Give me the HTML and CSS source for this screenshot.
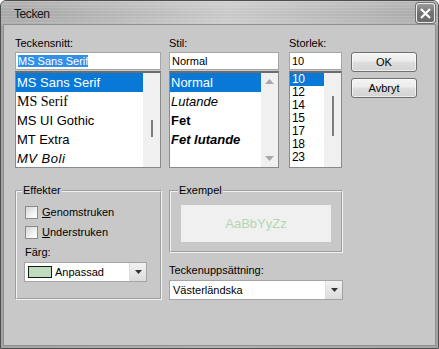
FILE: index.html
```html
<!DOCTYPE html>
<html>
<head>
<meta charset="utf-8">
<link rel="stylesheet" href="styles.css">
</head>
<body>
<div class="window">
  <div class="titlebar">
    <span class="title">Tecken</span>
    <div class="close">
      <svg width="11" height="11" viewBox="0 0 11 11"><path d="M1 1L10 10M10 1L1 10" stroke="#fff" stroke-width="2.2" fill="none"/></svg>
    </div>
  </div>
  <div class="client">
    <div class="top">
      <div class="col col-font">
        <div class="lbl">Teckensnitt:</div>
        <div class="input"><span class="hl">MS Sans Serif</span></div>
        <div class="list">
          <div class="items">
            <div class="item sel">MS Sans Serif</div>
            <div class="item f-serif">MS Serif</div>
            <div class="item">MS UI Gothic</div>
            <div class="item">MT Extra</div>
            <div class="item f-boli">MV Boli</div>
          </div>
          <div class="sb"><div class="thumb thumb-font"></div></div>
        </div>
      </div>
      <div class="col col-style">
        <div class="lbl">Stil:</div>
        <div class="input">Normal</div>
        <div class="list">
          <div class="items">
            <div class="item sel">Normal</div>
            <div class="item it">Lutande</div>
            <div class="item bd">Fet</div>
            <div class="item bd it">Fet lutande</div>
          </div>
          <div class="sb sb-arrows">
            <svg width="9" height="5" viewBox="0 0 9 5"><path d="M0 5L4.5 0L9 5Z" fill="#a8a8a8"/></svg>
            <svg width="9" height="5" viewBox="0 0 9 5"><path d="M0 0L4.5 5L9 0Z" fill="#a8a8a8"/></svg>
          </div>
        </div>
      </div>
      <div class="col col-size">
        <div class="lbl">Storlek:</div>
        <div class="input">10</div>
        <div class="list">
          <div class="items">
            <div class="item sz sel">10</div>
            <div class="item sz">12</div>
            <div class="item sz">14</div>
            <div class="item sz">15</div>
            <div class="item sz">17</div>
            <div class="item sz">18</div>
            <div class="item sz">23</div>
          </div>
          <div class="sb"><div class="thumb thumb-size"></div></div>
        </div>
      </div>
      <div class="buttons">
        <div class="btn">OK</div>
        <div class="btn">Avbryt</div>
      </div>
    </div>
    <div class="bottom">
      <fieldset class="group effekter">
        <legend>Effekter</legend>
        <div class="chk chk-first"><span class="box"></span><span><u>G</u>enomstruken</span></div>
        <div class="chk"><span class="box"></span><span><u>U</u>nderstruken</span></div>
        <div class="lbl2">Färg:</div>
        <div class="combo combo-color">
          <span class="swatch"></span><span class="ctext">Anpassad</span>
          <span class="drop"><svg width="7" height="4" viewBox="0 0 7 4"><path d="M0 0L3.5 4L7 0Z" fill="#333"/></svg></span>
        </div>
      </fieldset>
      <div class="rightcol">
        <fieldset class="group exempel">
          <legend>Exempel</legend>
          <div class="sample">AaBbYyZz</div>
        </fieldset>
        <div class="lbl3">Teckenuppsättning:</div>
        <div class="combo combo-charset">
          <span class="ctext">Västerländska</span>
          <span class="drop"><svg width="7" height="4" viewBox="0 0 7 4"><path d="M0 0L3.5 4L7 0Z" fill="#333"/></svg></span>
        </div>
      </div>
    </div>
  </div>
</div>
</body>
</html>
```
FILE: styles.css
```css
html, body {
  margin: 0;
  padding: 0;
  background: #ffffff;
}
body {
  font-family: "Liberation Sans", Arial, sans-serif;
  font-size: 11px;
  color: #000;
}
.window {
  width: 439px;
  height: 349px;
  box-sizing: border-box;
  border: 1px solid #4e4e4e;
  border-radius: 6px 6px 0 0;
  background: linear-gradient(90deg, #a4a4a4, #b4b4b4 50%, #a4a4a4);
  display: flex;
  flex-direction: column;
  overflow: hidden;
}
.titlebar {
  height: 24px;
  flex: none;
  display: flex;
  justify-content: space-between;
  align-items: flex-start;
  background:
    linear-gradient(90deg, rgba(255,255,255,0) 5%, rgba(255,255,255,0.38) 52%, rgba(255,255,255,0.05) 95%),
    repeating-linear-gradient(180deg, rgba(255,255,255,0.06) 0 1px, rgba(0,0,0,0.03) 1px 3px),
    linear-gradient(180deg, #bababa, #acacac 55%, #b6b6b6);
}
.title {
  margin: 6px 0 0 13px;
  font-size: 12px;
  line-height: 14px;
  letter-spacing: -0.4px;
  color: #141414;
}
.close {
  width: 19px;
  height: 20px;
  box-sizing: border-box;
  margin: 2px 3px 0 0;
  border: 1px solid #ececec;
  border-radius: 3px;
  box-shadow: 0 0 0 1px #707070;
  background: linear-gradient(180deg, #9a9a9a, #737373 50%, #6a6a6a);
  display: flex;
  align-items: center;
  justify-content: center;
}
.client {
  flex: 1;
  margin: 0 3px 3px;
  background: #c8c8c8;
  box-shadow: 0 0 0 1px #909090;
  padding: 11px 0 0 11px;
  box-sizing: border-box;
}
.top {
  display: flex;
  align-items: flex-start;
  height: 132px;
}
.col-font { width: 146px; }
.col-style { width: 110px; margin-left: 8px; }
.col-size { width: 53px; margin-left: 10px; }
.buttons { width: 66px; margin-left: 9px; padding-top: 16px; }
.lbl {
  height: 15px;
  line-height: 15px;
  margin-bottom: 1px;
}
.input {
  height: 18px;
  box-sizing: border-box;
  border: 1px solid #a6a6a6;
  background: #fff;
  padding: 0 2px;
  line-height: 16px;
  white-space: nowrap;
}
.hl {
  background: #3390e8;
  color: #fff;
}
.list {
  margin-top: 1px;
  height: 97px;
  box-sizing: border-box;
  border: 1px solid #8a8a8a;
  border-top: 2px solid #6c6c6c;
  background: #fff;
  display: flex;
  overflow: hidden;
}
.items {
  flex: 1;
  overflow: hidden;
}
.item {
  height: 19px;
  line-height: 19px;
  font-size: 13px;
  padding-left: 1px;
  white-space: nowrap;
}
.item.sel {
  background: #0a78d6;
  color: #fff;
}
.item.sz {
  height: 13px;
  line-height: 13px;
  font-size: 12px;
  padding-left: 2px;
  letter-spacing: -0.5px;
}
.f-serif {
  font-family: "Liberation Serif", "Times New Roman", serif;
  font-size: 14px;
}
.f-boli {
  font-style: italic;
  letter-spacing: 0.5px;
}
.it { font-style: italic; }
.bd { font-weight: bold; }
.sb {
  width: 17px;
  flex: none;
  background: #f0f0f0;
  display: flex;
  flex-direction: column;
  align-items: center;
}
.thumb {
  width: 2px;
  background: #7c7c7c;
}
.thumb-font { margin-top: 47px; height: 17px; }
.thumb-size { margin-top: 23px; height: 40px; }
.sb-arrows {
  justify-content: space-between;
  padding: 6px 0 6px;
  box-sizing: border-box;
}
.btn {
  height: 20px;
  box-sizing: border-box;
  border: 1px solid #707070;
  border-radius: 3px;
  background: linear-gradient(180deg, #f4f4f4 0%, #ececec 45%, #dedede 50%, #d2d2d2 100%);
  box-shadow: inset 0 0 0 1px rgba(255,255,255,0.6);
  text-align: center;
  line-height: 18px;
  margin-bottom: 6px;
}
.bottom {
  display: flex;
  align-items: flex-start;
  margin-top: 16px;
}
.group {
  margin: 0;
  padding: 0;
  box-sizing: border-box;
  border: 2px groove #f2f2f2;
  min-width: 0;
}
.group legend {
  padding: 0 1px;
  margin-left: 5px;
  line-height: 13px;
  font-size: 11px;
}
.effekter {
  width: 147px;
  height: 116px;
}
.chk {
  display: flex;
  align-items: center;
  height: 13px;
  margin: 7px 0 0 8px;
  line-height: 13px;
}
.chk-first { margin-top: 9px; }
.box {
  width: 13px;
  height: 13px;
  box-sizing: border-box;
  border: 1px solid #8a8a8a;
  background: linear-gradient(135deg, #d6d6d6, #f6f6f6 70%, #fdfdfd);
  margin-right: 4px;
  flex: none;
}
.lbl2 {
  margin: 6px 0 0 8px;
  line-height: 14px;
}
.combo {
  height: 20px;
  box-sizing: border-box;
  border: 1px solid #a4a4a4;
  background: #fff;
  display: flex;
  align-items: center;
}
.combo-color {
  width: 123px;
  margin: 3px 0 0 7px;
}
.swatch {
  width: 24px;
  height: 12px;
  box-sizing: border-box;
  border: 1px solid #1a1a1a;
  background: #c0dcc0;
  margin: 0 3px 0 3px;
  flex: none;
}
.ctext {
  flex: 1;
  white-space: nowrap;
}
.combo-charset .ctext { padding-left: 3px; }
.drop {
  width: 17px;
  height: 18px;
  flex: none;
  background: linear-gradient(180deg, #f2f2f2, #dcdcdc);
  border-left: 1px solid #dedede;
  box-sizing: border-box;
  display: flex;
  align-items: center;
  justify-content: center;
}
.rightcol {
  width: 174px;
  margin-left: 7px;
}
.exempel {
  width: 174px;
  height: 69px;
}
.exempel legend { margin-left: 7px; }
.sample {
  width: 150px;
  height: 37px;
  margin: 8px 0 0 10px;
  background: #f0f0f0;
  color: #b4d6b4;
  font-size: 13px;
  display: flex;
  align-items: center;
  justify-content: center;
}
.lbl3 {
  margin-top: 10px;
  line-height: 14px;
}
.combo-charset {
  width: 174px;
  margin-top: 3px;
}
```
